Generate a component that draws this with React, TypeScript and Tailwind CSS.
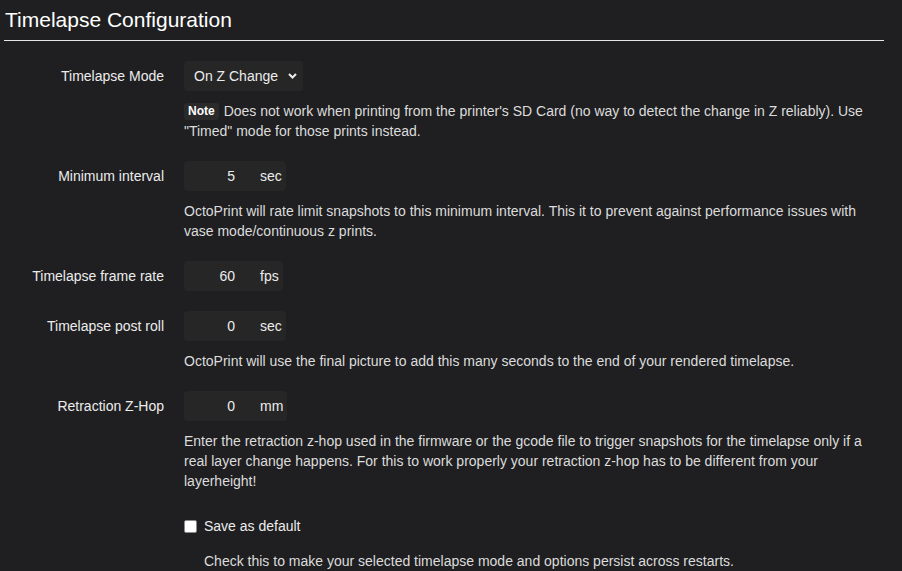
import React from "react";

const font = { fontFamily: '"Liberation Sans", Arial, sans-serif' };

const Row = ({ label, children }: { label: string; children: React.ReactNode }) => (
  <div className="flex items-center mb-[20px]">
    <div className="w-[160px] text-right text-[14px] text-[#ececec] shrink-0">{label}</div>
    <div className="ml-[20px] flex-1">{children}</div>
  </div>
);

const Help = ({ children, indent }: { children: React.ReactNode; indent?: boolean }) => (
  <div
    className={
      "mt-[-10px] mb-[20px] text-[14px] leading-[20px] text-[#dcdcdc] " +
      (indent ? "ml-[200px]" : "ml-[180px]")
    }
  >
    {children}
  </div>
);

const NumInput = ({ value, unit }: { value: string; unit: string }) => (
  <div className="inline-flex h-[30px] items-center bg-[#262627] rounded-[4px] text-[14px] text-[#ececec]">
    <div className="w-[66px] pr-[15px] text-right">{value}</div>
    <div className="pl-[10px] pr-[4px]">{unit}</div>
  </div>
);

export default function App() {
  return (
    <div className="w-[902px] h-[571px] bg-[#1f1f21] overflow-hidden" style={font}>
      <div className="w-[880px] ml-[4px]">
        <h3 className="pt-[5px] pb-[5px] pl-[1px] text-[21px] leading-[30px] text-white border-b border-[#e6e6e6]">
          Timelapse Configuration
        </h3>
        <div className="mt-[20px]">
          <Row label="Timelapse Mode">
            <div className="inline-flex h-[30px] w-[119px] items-center bg-[#262627] rounded-[4px] pl-[10px] text-[14px] text-[#ececec]">
              <span>On Z Change</span>
              <svg className="ml-[10px]" width="9" height="6" viewBox="0 0 9 6">
                <path d="M1 1l3.5 3.5L8 1" fill="none" stroke="#ececec" strokeWidth="2" />
              </svg>
            </div>
          </Row>
          <Help>
            <span className="inline-block align-top mt-[2px] bg-[#2a2a2b] rounded-[3px] px-[4px] text-[12px] leading-[17px] font-bold text-white mr-[5px]">
              Note
            </span>
            Does not work when printing from the printer's SD Card (no way to detect the change in Z reliably). Use
            "Timed" mode for those prints instead.
          </Help>
          <Row label="Minimum interval">
            <NumInput value="5" unit="sec" />
          </Row>
          <Help>
            OctoPrint will rate limit snapshots to this minimum interval. This it to prevent against performance issues with
            vase mode/continuous z prints.
          </Help>
          <Row label="Timelapse frame rate">
            <NumInput value="60" unit="fps" />
          </Row>
          <Row label="Timelapse post roll">
            <NumInput value="0" unit="sec" />
          </Row>
          <Help>OctoPrint will use the final picture to add this many seconds to the end of your rendered timelapse.</Help>
          <Row label="Retraction Z-Hop">
            <NumInput value="0" unit="mm" />
          </Row>
          <Help>
            Enter the retraction z-hop used in the firmware or the gcode file to trigger snapshots for the timelapse only if a
            real layer change happens. For this to work properly your retraction z-hop has to be different from your
            layerheight!
          </Help>
          <div className="flex items-center h-[30px] mt-[10px] mb-[20px] ml-[180px]">
            <div className="w-[13px] h-[13px] bg-white rounded-[2px] border border-[#8a8a8a]" />
            <span className="ml-[7px] text-[14px] text-[#ececec]">Save as default</span>
          </div>
          <Help indent>Check this to make your selected timelapse mode and options persist across restarts.</Help>
        </div>
      </div>
    </div>
  );
}
